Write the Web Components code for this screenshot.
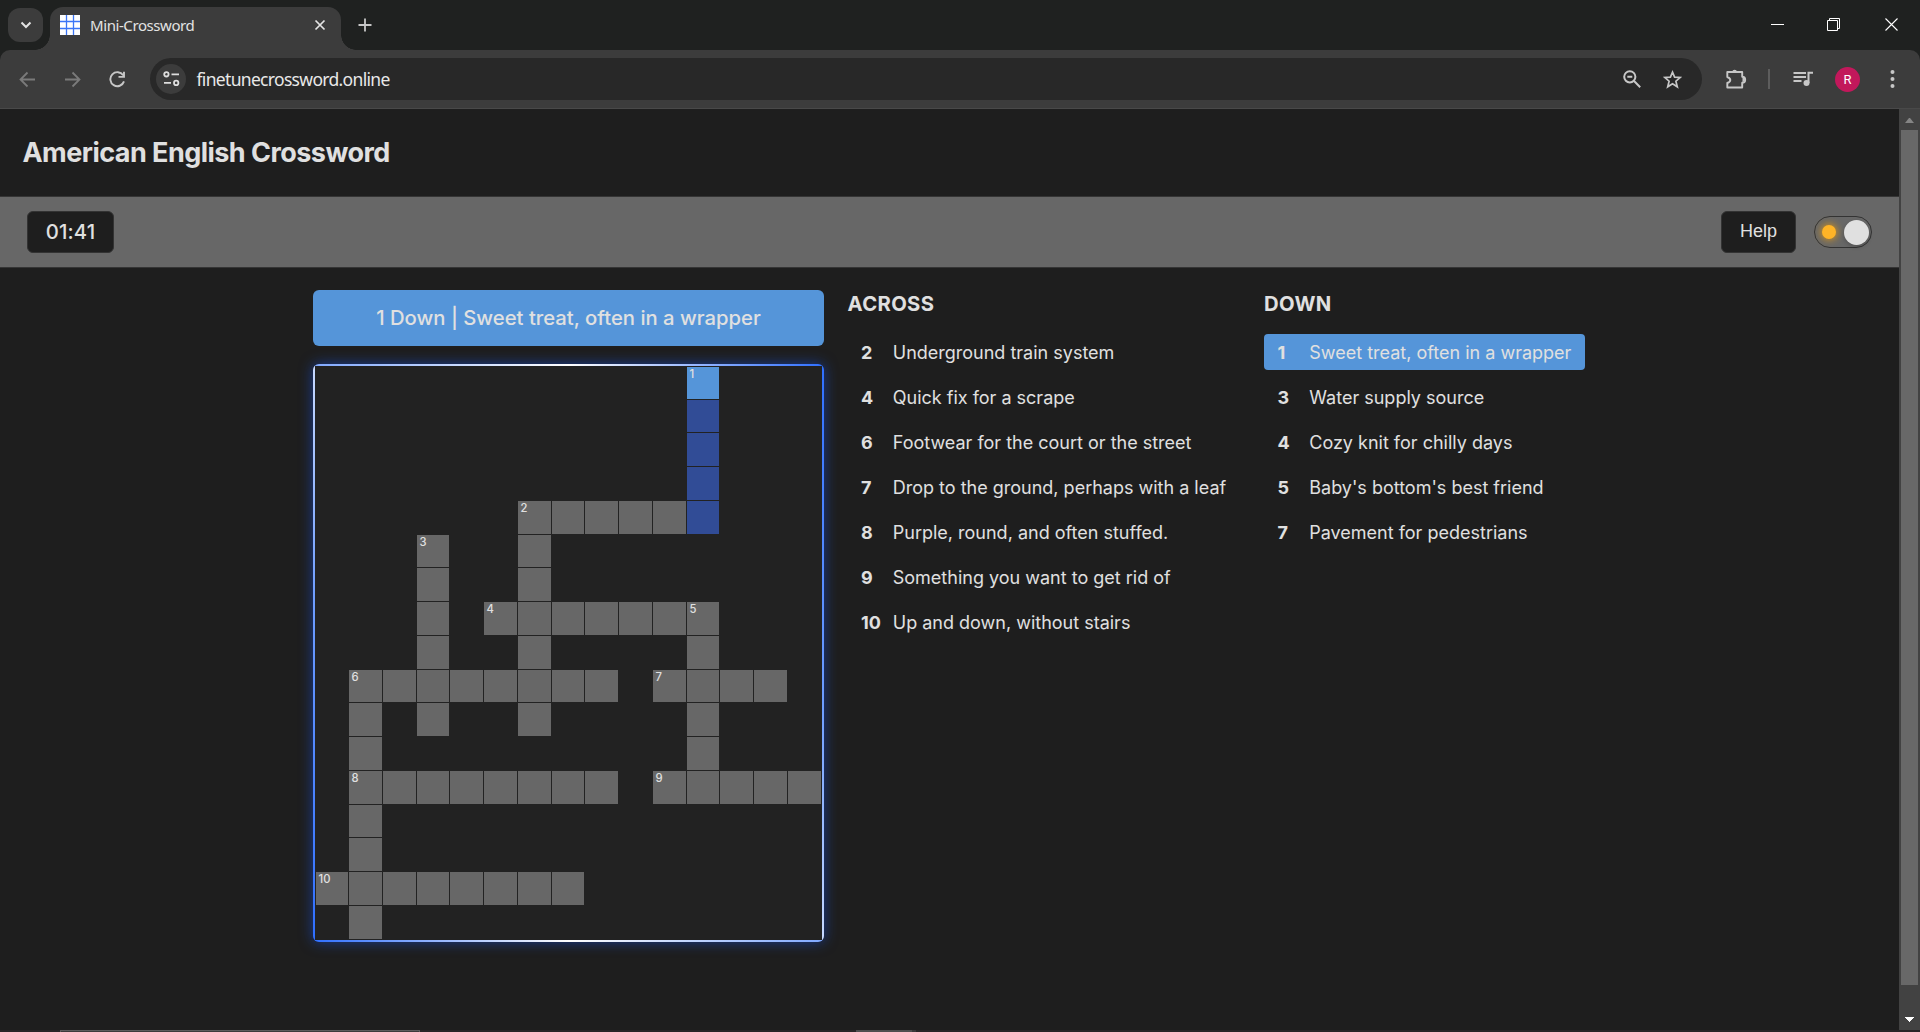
<!DOCTYPE html>
<html lang="en">
<head>
<meta charset="utf-8">
<title>Mini-Crossword</title>
<style>
html,body{margin:0;height:100%;overflow:hidden;background:#1e1e1e}
body{font-family:Inter,sans-serif;color:#e0e0e0}
</style>
</head>
<body>
<app-window></app-window>
<script>
function define(name, css, html, setup) {
  customElements.define(name, class extends HTMLElement {
    constructor() {
      super();
      this.attachShadow({ mode: 'open' });
    }
    connectedCallback() {
      if (this.ready) return;
      this.ready = true;
      const body = typeof html === 'function' ? html(this) : html;
      this.shadowRoot.innerHTML = '<style>*{box-sizing:border-box}' + css + '</style>' + body;
      if (setup) setup(this);
    }
  });
}

define('tab-strip', `
:host{display:flex;height:50px;background:#1f2120;padding-left:8px;box-sizing:border-box}
.search{width:35px;height:34px;margin-top:8px;border-radius:12px;background:#3c3c3c;display:grid;place-items:center}
.tab{position:relative;width:291px;height:43px;margin:7px 0 0 7px;background:#3c3c3c;border-radius:13px 13px 0 0;display:flex;align-items:center;padding:0 15px 7px 10px}
.tab:before,.tab:after{content:"";position:absolute;bottom:0;width:15px;height:15px}
.tab:before{left:-15px;background:radial-gradient(circle at 0 0,transparent 14.5px,#3c3c3c 15px)}
.tab:after{right:-15px;background:radial-gradient(circle at 100% 0,transparent 14.5px,#3c3c3c 15px)}
.title{flex:1;margin-left:10px;font:15px/20px "Noto Sans",sans-serif;color:#e3e3e3;letter-spacing:-.42px}
.new{margin:18px 0 0 17px}
.win{margin-left:auto;display:flex;padding:17px 21px 0 0;align-items:flex-start}
.win svg+svg{margin-left:41px}
.win svg+svg+svg{margin-left:43px}
svg{display:block}
`, `
<div class="search"><svg width="12" height="8" viewBox="0 0 12 8" fill="none" stroke="#e3e3e3" stroke-width="2"><path d="M1.5 1.5 6 6l4.5-4.500"/></svg></div>
<div class="tab">
<svg width="20" height="20" viewBox="0 0 20 20"><rect width="20" height="20" fill="#fff"/><path d="M6.500 0v20M13.500 0v20M0 6.500h20M0 13.500h20" stroke="#3b75f6" stroke-width="1.300"/></svg>
<span class="title">Mini-Crossword</span>
<svg width="12" height="12" viewBox="0 0 12 12" stroke="#e3e3e3" stroke-width="1.700"><path d="m1.500 1.500 9 9m0-9-9 9"/></svg>
</div>
<svg class="new" width="14" height="14" viewBox="0 0 14 14" stroke="#c7c7c7" stroke-width="1.800"><path d="M7 .5v13M.5 7h13"/></svg>
<div class="win">
<svg width="14" height="15" stroke="#fff"><path d="M0 7.500h13"/></svg>
<svg width="15" height="15" fill="none" stroke="#fff"><path d="M1.500 3.500h10v10h-10zM3.500 3V1.500h10v10H12"/></svg>
<svg width="15" height="15" stroke="#fff" stroke-width="1.100"><path d="m1.500 1.500 12 12m0-12-12 12"/></svg>
</div>`);

define('tool-bar', `
:host{display:block;height:59px;background:#1f2120}
.bar{height:59px;display:flex;align-items:center;background:#3c3c3c;border-radius:10px 10px 0 0;border-bottom:1px solid #494949;padding:0 25px 0 19px}
svg{display:block;flex:none}
.nav{display:flex;gap:28px;align-items:center;width:131px}
.omni{flex:1;height:42px;border-radius:21px;background:#282828;display:flex;align-items:center;padding:0 20px 0 6px;margin-right:23px}
.site{width:30px;height:30px;border-radius:50%;background:#3c3c3c;display:grid;place-items:center}
.url{flex:1;margin-left:10.500px;font:17.500px/24px "Noto Sans",sans-serif;letter-spacing:-.68px;color:#e8e8e8}
.sep{width:2px;height:20px;background:#5d5d5d;margin:0 23px 0 21px}
.av{width:25px;height:25px;border-radius:50%;background:#c2185b;display:grid;place-items:center;font:13px Roboto,sans-serif;color:#fff;margin:0 30px 0 21px}
`, `
<div class="bar">
<div class="nav">
<svg width="17" height="17" viewBox="0 0 17 17" fill="none" stroke="#7a7a7a" stroke-width="1.800"><path d="M16 8.500H2M8.500 1.500l-7 7 7 7"/></svg>
<svg width="17" height="17" viewBox="0 0 17 17" fill="none" stroke="#7a7a7a" stroke-width="1.800"><path d="M1 8.500h14M8.500 1.500l7 7-7 7"/></svg>
<svg width="17" height="17" viewBox="0 0 17 17" fill="none" stroke="#c7c7c7" stroke-width="1.900"><path d="M14.200 4.300A7 7 0 1 0 15 10.400M15 .8v5.100H9.500"/></svg>
</div>
<div class="omni">
<div class="site"><svg width="17" height="16" viewBox="0 0 17 16" fill="none" stroke="#dedede" stroke-width="1.800"><circle cx="3.400" cy="3.300" r="2.200"/><path d="M8.500 3.300H16M1 11.900h7"/><circle cx="13.200" cy="11.900" r="2.200"/></svg></div>
<span class="url">finetunecrossword.online</span>
<svg width="18" height="18" viewBox="0 0 18 18" fill="none" stroke="#c7c7c7" stroke-width="2"><circle cx="6.800" cy="6.800" r="5.600"/><path d="m10.800 10.800 6.400 6.400M4.300 6.800h5"/></svg>
<svg style="margin-left:22px" width="19" height="19" viewBox="0 0 19 19" fill="none" stroke="#c7c7c7" stroke-width="1.700"><path d="m9.500 2.200 2.100 4.900 5.600.4-4.300 3.700 1.400 5.600-4.800-3-4.800 3 1.400-5.600-4.300-3.700 5.600-.4z"/></svg>
</div>
<svg width="22" height="21" viewBox="0 0 22 21"><path d="M3 3h14.200v4.700a2.500 2.500 0 0 1 0 6v4.800H2.300V14c4-1.500 4-4.500 0-6V3z" fill="none" stroke="#c7c7c7" stroke-width="1.900" stroke-linejoin="round"/><path d="M7.300 3a2.300 2.300 0 0 1 4.600 0zM17.500 8.200a2.400 2.400 0 0 1 0 4.800z" fill="#c7c7c7"/></svg>
<div class="sep"></div>
<svg width="21" height="16" viewBox="0 0 21 16"><path d="M.5 2h12.500M.5 6h12.500M.5 10h8M15.500 12V1.700h4.500" fill="none" stroke="#c7c7c7" stroke-width="2"/><circle cx="13.500" cy="12" r="3" fill="#c7c7c7"/></svg>
<div class="av">R</div>
<svg width="5" height="18" viewBox="0 0 5 18" fill="#c7c7c7"><circle cx="2.500" cy="2" r="2"/><circle cx="2.500" cy="9" r="2"/><circle cx="2.500" cy="16" r="2"/></svg>
</div>`);

define('scroll-bar', `
:host{display:flex;flex-direction:column;align-items:center;width:21px;background:#424242;padding:9px 0 8px;box-sizing:border-box}
.thumb{width:17px;height:855px;background:#686868;margin-top:7px}
svg{display:block}
svg:last-child{margin-top:auto}
`, `
<svg width="9" height="5"><path d="M0 5h9L5 0H4z" fill="#858585"/></svg>
<div class="thumb"></div>
<svg width="9" height="5" shape-rendering="crispEdges"><path d="M0 0h9L5 5H4z" fill="#fff"/></svg>`);

define('page-header', `
:host{display:block;height:88px;box-sizing:border-box;border-bottom:1px solid #353535;padding:27px 22.500px 0;background:#1e1e1e}
h1{margin:0;font:700 27px/34px Inter,sans-serif;letter-spacing:-.54px;color:#e0e0e0}
`, `<h1><slot></slot></h1>`);

define('control-button', `
:host{display:inline-flex;align-items:center;justify-content:center;height:42px;box-sizing:border-box;border:1px solid #333;border-radius:6px;background:#1e1e1e;color:#e0e0e0;font-family:Inter,sans-serif}
`, `<slot></slot>`);

define('theme-switch', `
:host{display:flex;align-items:center;justify-content:space-between;width:58px;height:32px;box-sizing:border-box;border:1px solid #333;border-radius:16px;padding:0 2px 0 7px}
.sun{width:14px;height:14px;border-radius:50%;background:#ffb427;box-shadow:0 0 9px #ffa500}
.knob{width:25px;height:25px;border-radius:50%;background:#e0e0e0;box-shadow:0 2px 4px #0003}
`, `<span class="sun"></span><span class="knob"></span>`);

define('control-bar', `
:host{display:flex;align-items:center;height:71px;box-sizing:border-box;background:#676767;border-bottom:1px solid #353535;padding:0 27px}
.time{width:87px;font-size:20.250px;font-weight:500;letter-spacing:.15px;padding-bottom:1px}
.help{width:75px;margin:0 18px 0 auto;font:18px "Liberation Sans",sans-serif;padding-bottom:1px}
`, `<control-button class="time">01:41</control-button><control-button class="help">Help</control-button><theme-switch></theme-switch>`);

define('grid-cell', `
:host{display:block;min-width:0;min-height:0;font:500 11.250px/12px Inter,sans-serif;color:#e0e0e0;padding:1px 0 0 2.500px;box-sizing:border-box}
:host([kind="open"]){background:#676767}
:host([kind="word"]){background:#314c96}
:host([kind="focus"]){background:#5595d9}
`, `<slot></slot>`);

const rows = [
  '...........F...',
  '...........W...',
  '...........W...',
  '...........W...',
  '......#####W...',
  '...#..#........',
  '...#..#........',
  '...#.#######...',
  '...#..#....#...',
  '.########.####.',
  '.#.#..#....#...',
  '.#.........#...',
  '.########.#####',
  '.#.............',
  '.#.............',
  '########.......',
  '.#.............'
];
const labels = { '0,11': 1, '4,6': 2, '5,3': 3, '7,5': 4, '7,11': 5, '9,1': 6, '9,10': 7, '12,1': 8, '12,10': 9, '15,0': 10 };
const kinds = { '#': 'open', W: 'word', F: 'focus', '.': 'block' };

define('crossword-grid', `
:host{display:block;width:511px;height:578px;padding:2px;box-sizing:border-box;border-radius:6px;
background:
linear-gradient(90deg,#7fa8ff,#fff 50%,#2f6fff) 0 0/100% 2px no-repeat,
linear-gradient(90deg,#2f6fff,#fff 50%,#7fa8ff) 0 100%/100% 2px no-repeat,
linear-gradient(#c8daff,#6f9eff 40%,#2f6fff) 0 0/2px 100% no-repeat,
linear-gradient(#2f6fff,#6f9eff 60%,#c8daff) 100% 0/2px 100% no-repeat,#222;
box-shadow:0 0 14px #1650e099}
.cells{height:574px;display:grid;grid-template-columns:32px repeat(2,33px) 32px repeat(3,33px) 32px repeat(3,33px) 32px repeat(3,33px);
grid-template-rows:32px 32px repeat(3,33px) 32px repeat(3,33px) 32px repeat(3,33px) 32px repeat(3,33px);gap:1px;padding:1px;background:#222;border-radius:4px}
`, () => '<div class="cells">' + rows.map((row, y) => [...row].map((c, x) =>
  `<grid-cell kind="${kinds[c]}">${labels[y + ',' + x] || ''}</grid-cell>`).join('')).join('') + '</div>');

define('clue-banner', `
:host{display:flex;align-items:center;justify-content:center;height:56px;border-radius:6px;background:#5595d9;color:#e0e0e0;font:500 20.250px/24px Inter,sans-serif}
`, `<span><slot></slot></span>`);

define('clue-item', `
:host{display:flex;align-items:center;height:36px;box-sizing:border-box;border-radius:4px;padding:2px 13.500px 0;font:18px/24px Inter,sans-serif;color:#e0e0e0;margin-bottom:9px;width:max-content}
:host([active]){background:#5595d9}
b{width:31.750px;font-weight:700}
`, el => `<b>${el.getAttribute('n')}</b><span><slot></slot></span>`);

define('clue-list', `
:host{display:block}
h2{margin:0 0 18px;font:700 20.250px/24px Inter,sans-serif;letter-spacing:.36px;color:#e0e0e0}
`, el => `<h2>${el.getAttribute('heading')}</h2><slot></slot>`);

define('task-edge', `
:host{display:flex;height:2px;background:#2a2628}
.a{width:360px;margin-left:60px;background:#3d3b3c;border:1px solid #5d5b5c;border-bottom:0}
.b{width:56px;margin-left:436px;background:#504e4f}
.c{width:4px;background:#3b393a}
`, `<span class="a"></span><span class="b"></span><span class="c"></span>`);

define('app-window', `
:host{display:flex;flex-direction:column;width:1920px;height:1032px}
.view{display:flex;height:921px}
.page{flex:1;background:#1e1e1e}
main{display:flex;padding:22px 0 0 313px}
.board{width:511px;display:flex;flex-direction:column;gap:18px}
.across{width:440px;padding:2px 0 0 23.500px;box-sizing:border-box}
.down{padding-top:2px}
`, `
<tab-strip></tab-strip>
<tool-bar></tool-bar>
<div class="view">
<div class="page">
<page-header>American English Crossword</page-header>
<control-bar></control-bar>
<main>
<div class="board"><clue-banner>1 Down | Sweet treat, often in a wrapper</clue-banner><crossword-grid></crossword-grid></div>
<clue-list class="across" heading="ACROSS">
<clue-item n="2">Underground train system</clue-item>
<clue-item n="4">Quick fix for a scrape</clue-item>
<clue-item n="6">Footwear for the court or the street</clue-item>
<clue-item n="7">Drop to the ground, perhaps with a leaf</clue-item>
<clue-item n="8">Purple, round, and often stuffed.</clue-item>
<clue-item n="9">Something you want to get rid of</clue-item>
<clue-item n="10">Up and down, without stairs</clue-item>
</clue-list>
<clue-list class="down" heading="DOWN">
<clue-item n="1" active>Sweet treat, often in a wrapper</clue-item>
<clue-item n="3">Water supply source</clue-item>
<clue-item n="4">Cozy knit for chilly days</clue-item>
<clue-item n="5">Baby's bottom's best friend</clue-item>
<clue-item n="7">Pavement for pedestrians</clue-item>
</clue-list>
</main>
</div>
<scroll-bar></scroll-bar>
</div>
<task-edge></task-edge>`);
</script>
</body>
</html>
